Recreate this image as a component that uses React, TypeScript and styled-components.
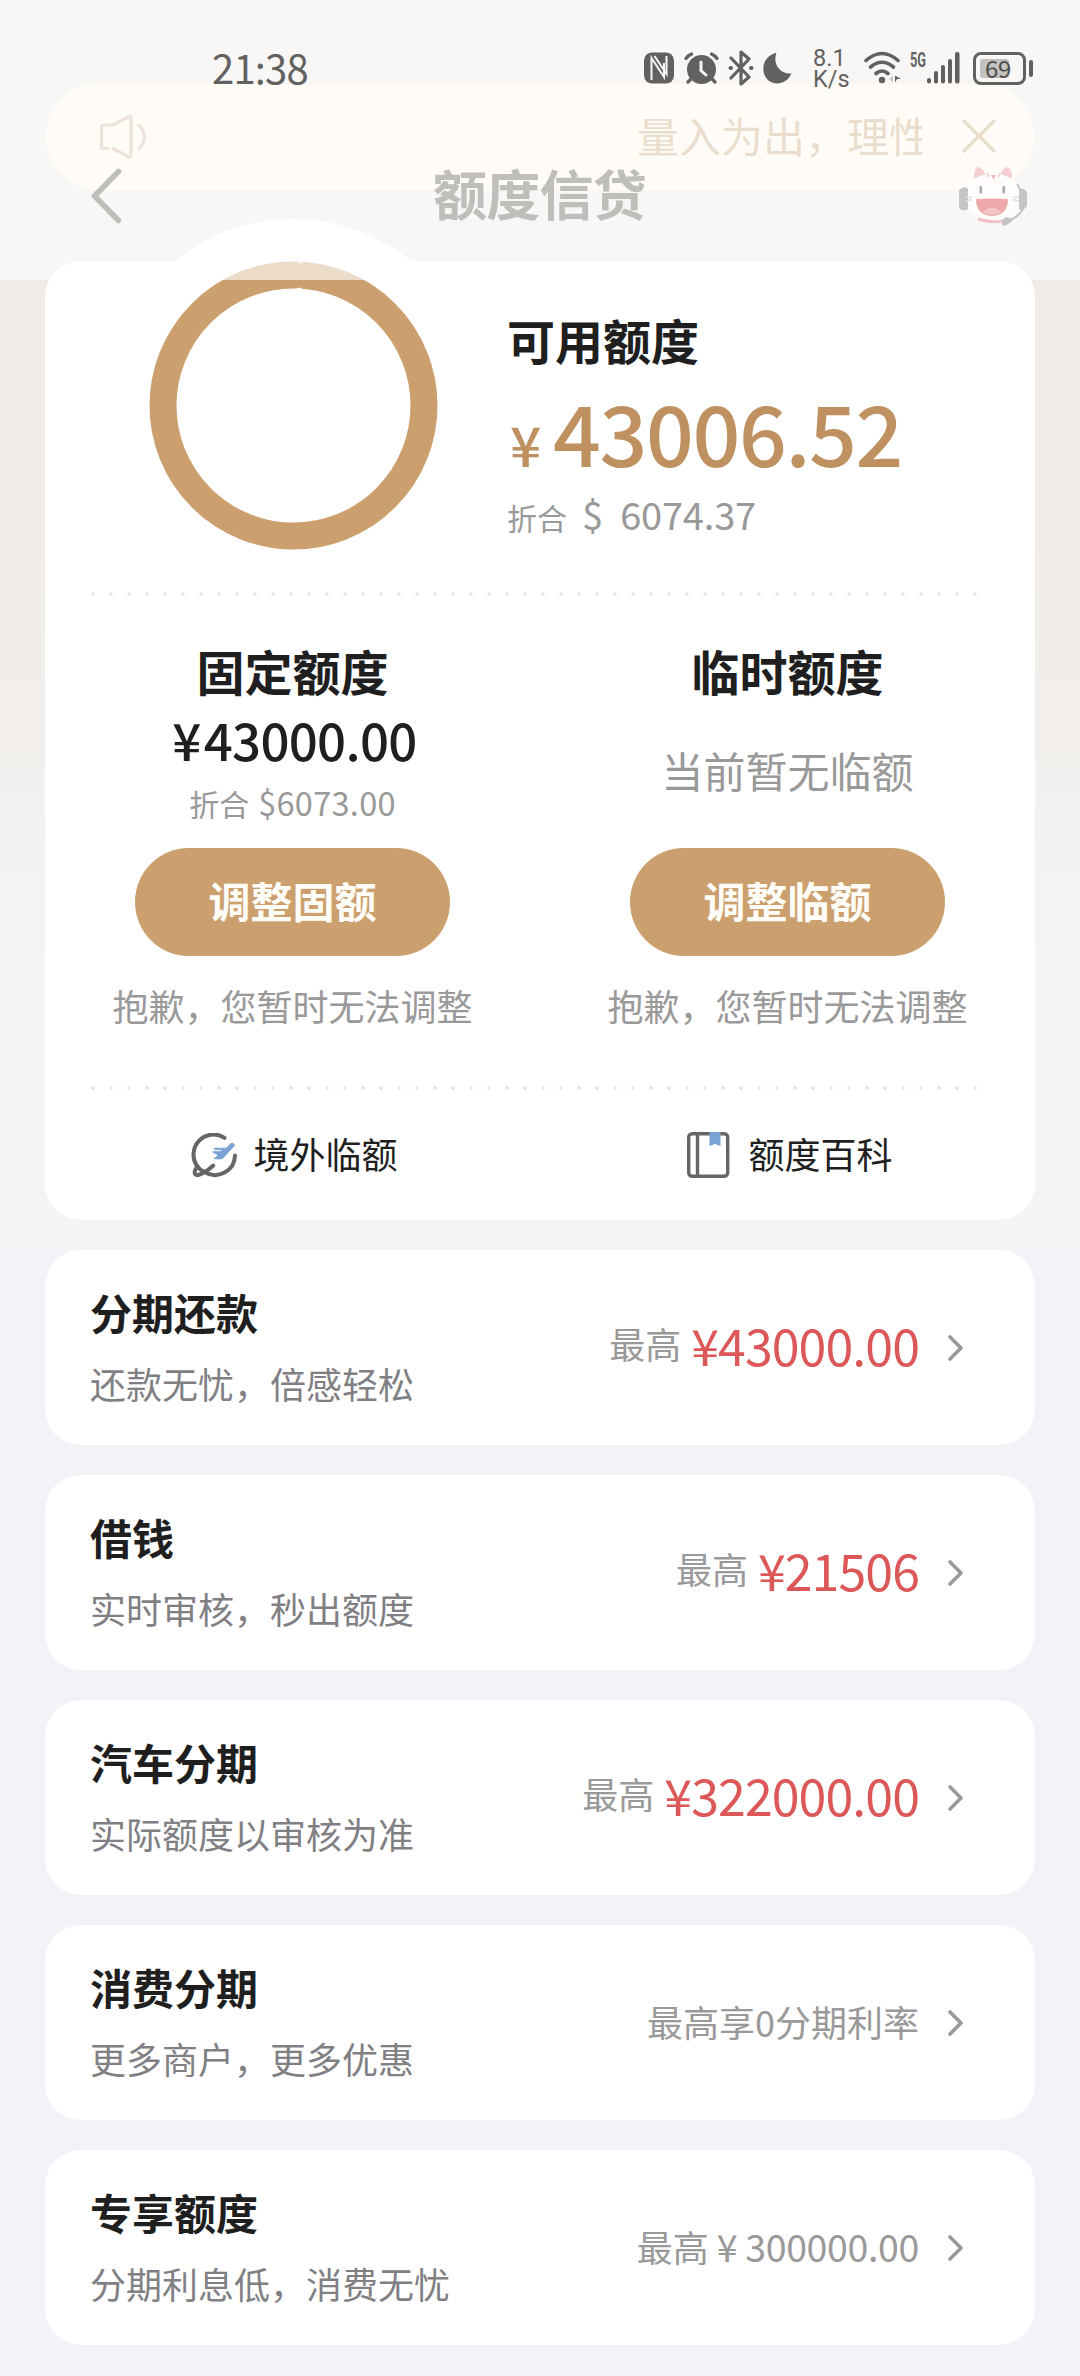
import React from "react";
import styled, { createGlobalStyle } from "styled-components";

const FONT = `"Noto Sans CJK SC", "Noto Sans", sans-serif`;

const GlobalStyle = createGlobalStyle`
  * { box-sizing: border-box; }
  body { margin: 0; background: #f2f3f8; font-family: ${FONT}; }
`;

const Page = styled.div`
  position: relative;
  width: 1080px;
  height: 2376px;
  overflow: hidden;
  padding: 84px 45px 0;
  background: linear-gradient(180deg, #f0ebe6 0, #f0ebe6 540px, #f4f4f4 960px, #f4f4f4 1244px, #f2f3f8 1256px);
`;

/* Translucent header laid over the scrolled content */
const Header = styled.header`
  position: absolute;
  inset: 0 0 auto 0;
  z-index: 2;
  height: 280px;
  background: rgba(255, 255, 255, 0.62);
`;

const StatusBar = styled.div`
  height: 94px;
  padding: 44px 47px 0 212px;
  display: flex;
  justify-content: space-between;
  align-items: flex-start;
  color: #62615f;
`;

const Clock = styled.div`
  font-size: 40px;
  line-height: 46px;
  letter-spacing: -0.8px;
`;

const StatusIcons = styled.div`
  display: flex;
  align-items: flex-start;
  height: 48px;
`;

const StatusGlyph = styled.svg<{ $gap?: number }>`
  display: block;
  flex: none;
  margin-left: ${(p) => p.$gap ?? 0}px;
`;

const NetSpeed = styled.div`
  width: 36px;
  margin: 4px 0 0 20px;
  font-family: Roboto, sans-serif;
  font-size: 23.5px;
  line-height: 21px;
  white-space: nowrap;
`;

const NetType = styled.div`
  width: 16px;
  margin: 7px 0 0 9px;
  font-family: Roboto, sans-serif;
  font-weight: 700;
  font-size: 20px;
  line-height: 18px;
  transform: scaleX(0.64);
  transform-origin: 0 0;
`;

const Battery = styled.div`
  display: flex;
  align-items: center;
  margin: 8px 0 0 13px;
`;

const BatteryShell = styled.div`
  width: 53px;
  height: 33px;
  padding: 4px;
  border: 3px solid #62615f;
  border-radius: 8px;
`;

const BatteryLevel = styled.div`
  width: 29px;
  height: 19px;
  border-radius: 3px;
  background: #c3c2c0;
  font-size: 24px;
  line-height: 17px;
  padding-left: 5px;
  letter-spacing: -0.4px;
  color: #4e4d4b;
`;

const BatteryTip = styled.div`
  width: 4px;
  height: 17px;
  margin-left: 3px;
  border-radius: 2px;
  background: #62615f;
`;

const TitleBar = styled.div`
  height: 186px;
  padding: 72px 52px 0 88px;
  display: grid;
  grid-template-columns: 72px 1fr 72px;
  align-items: start;
`;

const Title = styled.h1`
  margin: -1px 0 0 -37px;
  text-align: center;
  font-size: 54px;
  font-weight: 700;
  line-height: 56px;
  letter-spacing: -0.8px;
  color: #bfbebb;
`;

const BackIcon = styled.svg`
  display: block;
`;

const Mascot = styled.svg`
  display: block;
  margin: -3px 0 0 1px;
`;

const Notice = styled.div`
  height: 106px;
  margin: 0 1px 71px;
  padding: 0 38px 0 52px;
  border-radius: 53px;
  background: #fff8e9;
  display: flex;
  align-items: center;
`;

const NoticeText = styled.div`
  width: 285px;
  margin: -4px 40px 0 auto;
  overflow: hidden;
  white-space: nowrap;
  font-size: 42px;
  line-height: 60px;
  color: #caa67f;
`;

const Card = styled.section`
  position: relative;
  border-radius: 36px;
  background: #fff;
`;

const QuotaCard = styled(Card)`
  height: 959px;
`;

/* White halo that rises out of the top edge of the card */
const Halo = styled.div`
  position: absolute;
  left: 62px;
  top: -42px;
  width: 372px;
  height: 372px;
  border-radius: 50%;
  background: #fff;
`;

const Summary = styled.div`
  position: relative;
  height: 331px;
  display: flex;
`;

const Ring = styled.svg`
  flex: none;
  margin-left: 104px;
`;

const SummaryText = styled.div`
  margin-left: 68px;
  padding-top: 50px;
`;

const Heading = styled.h2`
  margin: 0;
  font-size: 48px;
  font-weight: 700;
  line-height: 56px;
  color: #1f1f1f;
`;

const Total = styled.div`
  height: 100px;
  margin: 14px 0 0 -1px;
  display: flex;
  align-items: baseline;
  font-weight: 500;
  font-size: 84px;
  line-height: 100px;
  letter-spacing: -1.4px;
  color: #bf9160;
`;

const TotalSign = styled.span`
  font-size: 55px;
  width: 47px;
  padding-left: 4px;
`;

const Converted = styled.div`
  display: flex;
  align-items: baseline;
  margin-top: 8px;
  font-size: 30px;
  line-height: 50px;
  color: #999;
`;

const Dollar = styled.span`
  margin-left: 15px;
  font-size: 38px;
  letter-spacing: -0.2px;
  word-spacing: 9px;
`;

const Dots = styled.div`
  width: 888px;
  height: 4px;
  margin: 0 0 0 45px;
  background: radial-gradient(circle at 3px 2px, #e8e8e8 1.5px, transparent 2.1px) 0 0 / 18px 4px repeat-x;
`;

const Columns = styled.div`
  display: grid;
  grid-template-columns: 1fr 1fr;
`;

const Column = styled.div`
  height: 490px;
  padding-top: 46px;
  display: flex;
  flex-direction: column;
  align-items: center;
`;

const ColumnBody = styled.div`
  height: 150px;
  display: flex;
  flex-direction: column;
  align-items: center;
`;

const Amount = styled.div`
  margin: 10px 0 0 4px;
  display: flex;
  gap: 3px;
  font-size: 51px;
  font-weight: 500;
  line-height: 62px;
  letter-spacing: -0.7px;
  color: #1f1f1f;
`;

const Small = styled.div`
  margin-top: 10px;
  font-size: 30px;
  line-height: 44px;
  color: #999;
`;

const SmallAmount = styled.span`
  margin-left: 9px;
  font-size: 32.5px;
  letter-spacing: 0.3px;
`;

const Empty = styled.div`
  margin-top: 42px;
  font-size: 42px;
  line-height: 60px;
  color: #999;
`;

const Pill = styled.button`
  width: 315px;
  height: 108px;
  padding: 0 0 5px;
  border: 0;
  border-radius: 54px;
  background: #cca06e;
  color: #fffdf8;
  font-family: ${FONT};
  font-size: 42px;
  font-weight: 700;
`;

const Hint = styled.div`
  margin-top: 23px;
  font-size: 36px;
  line-height: 52px;
  color: #999;
`;

const Links = styled(Columns)`
  height: 131px;
`;

const LinkItem = styled.div`
  display: flex;
  align-items: center;
  justify-content: center;
  gap: 16px;
  padding-left: 4px;
  font-size: 36px;
  line-height: 50px;
  color: #1f1f1f;
`;

const LinkLabel = styled.span`
  padding-bottom: 5px;
`;

const Products = styled.div`
  display: flex;
  flex-direction: column;
  gap: 30px;
  margin-top: 30px;
`;

const Product = styled(Card)`
  height: 195px;
  padding: 0 71px 0 45px;
  display: flex;
  align-items: center;
  justify-content: space-between;
`;

const ProductText = styled.div`
  padding-bottom: 4px;
`;

const ProductName = styled.h3`
  margin: 0;
  font-size: 42px;
  font-weight: 700;
  line-height: 60px;
  color: #1f1f1f;
`;

const ProductNote = styled.p`
  margin: 15px 0 0;
  font-size: 36px;
  line-height: 52px;
  color: #7f7f84;
`;

const ProductValue = styled.div`
  display: flex;
  align-items: center;
  font-size: 36px;
  line-height: 60px;
  color: #999;
`;

const ValueText = styled.span<{ $priced?: boolean }>`
  display: flex;
  align-items: ${(p) => (p.$priced ? "center" : "baseline")};
  margin-right: 28px;
  padding-bottom: ${(p) => (p.$priced ? 9 : 4)}px;
`;

const Price = styled.span`
  margin: 2px 0 0 10px;
  font-size: 50px;
  letter-spacing: -0.9px;
  color: #dc5757;
`;

const PlainPrice = styled.span`
  font-size: 37.5px;
  margin-left: 8px;
  display: flex;
  gap: 8px;
  letter-spacing: -0.35px;
`;

const ChevronRight = () => (
  <svg width="17" height="28" viewBox="0 0 17 28" fill="none" stroke="#999" strokeWidth="3.6" strokeLinecap="round" strokeLinejoin="round">
    <path d="M3 3 L14 14 L3 25" />
  </svg>
);

const CloseIcon = () => (
  <svg width="34" height="34" viewBox="0 0 34 34" fill="none" stroke="#caa67f" strokeWidth="3.4" strokeLinecap="round">
    <path d="M2 1 L32 31 M32 1 L2 31" />
  </svg>
);

const SpeakerIcon = () => (
  <svg width="50" height="48" viewBox="0 0 50 48" fill="none" stroke="#d4b398" strokeWidth="3.2" strokeLinecap="round" strokeLinejoin="round">
    <path d="M10 35.500 H4.500 Q3.500 35.500 3.500 34.500 V14 Q3.500 12 5.500 12 H13 Q15 12 17 11 L31 3.500 Q33 2.500 33 5 V41 Q33 45 30 43.500 L15 35.500" />
    <path d="M41 12.500 Q52 24 41 35.500" />
  </svg>
);

const PlaneGlobeIcon = () => (
  <svg width="46" height="46" viewBox="190 1132 46 46" fill="none" stroke="#666" strokeWidth="4" strokeLinecap="round" strokeLinejoin="round">
    <path d="M223.500 1136.800 A20 20 0 0 0 196.500 1165.500" />
    <path d="M234 1154.500 A20 20 0 0 1 203.500 1171" />
    <path d="M196.500 1165.500 C192 1171 193 1175.500 198.500 1173.500 C203 1172 208 1168.500 212.200 1164.500" />
    <path d="M196.500 1165.500 Q198.500 1168.500 203.500 1171" />
    <path
      fill="#79a3d2"
      stroke="#79a3d2"
      strokeWidth="0.8"
      d="M230 1142.500 Q233 1141.500 233.500 1144.500 L222.500 1156.500 Q221 1158 218.500 1158 L213 1157.500 L217 1154.500 L215.500 1153 L212 1151.500 L212.500 1150.500 L219 1150.800 L221.500 1149 L213 1148.300 L214 1147 L225 1147.200 Z"
    />
  </svg>
);

const BookIcon = () => (
  <svg width="46" height="48" viewBox="0 1 46 48" fill="none" stroke="#666" strokeWidth="3.4">
    <rect x="2.700" y="2.700" width="39" height="42.600" rx="3.500" />
    <path d="M11.500 3 V45" />
    <path d="M23.500 1 H34.500 V15 L29 13 L23.500 15 Z" fill="#79a3d2" stroke="none" />
  </svg>
);

const NfcIcon = () => (
  <StatusGlyph width="30" height="32" viewBox="0 0 30 32">
    <rect x="0" y="0.500" width="30" height="31" rx="8" fill="currentColor" />
    <path d="M7.500 28 V6 L20 25 V11 M10.500 4 L22.500 22 V4" fill="none" stroke="#f8f7f5" strokeWidth="2" />
  </StatusGlyph>
);

const AlarmIcon = () => (
  <StatusGlyph $gap={10} width="35" height="32" viewBox="0 0 35 32">
    <g fill="none" stroke="currentColor" strokeWidth="3.200" strokeLinecap="round">
      <path d="M2 6.500 Q4 3.500 7.500 2 M33 6.500 Q31 3.500 27.500 2 M8 26 L4 30 M27 26 L31 30" />
    </g>
    <circle cx="17.500" cy="17.500" r="14.500" fill="currentColor" />
    <path d="M17 10 V18.500 L22 23" fill="none" stroke="#f8f7f5" strokeWidth="3" strokeLinecap="round" />
  </StatusGlyph>
);

const BluetoothIcon = () => (
  <StatusGlyph $gap={9} width="26" height="36" viewBox="0 0 26 36" fill="none" stroke="currentColor" strokeWidth="3.2" strokeLinejoin="round" strokeLinecap="round">
    <path d="M3 8 L21 27 L13 34 V2 L21 9 L3 28" />
    <path d="M2.500 18 H3 M23 18 H23.500" strokeWidth="4" />
  </StatusGlyph>
);

const MoonIcon = () => (
  <StatusGlyph $gap={9} width="30" height="32" viewBox="0 0 30 32" fill="currentColor">
    <path d="M13.500 0.500 C9.500 11 16 22.500 28.500 21.500 C24 31.500 14 33.500 7 29.500 C-3 23 -2.500 5 13.500 0.500 Z" />
  </StatusGlyph>
);

const WifiIcon = () => (
  <StatusGlyph $gap={15} width="37" height="34" viewBox="0 0 37 34" fill="none" stroke="currentColor" strokeWidth="3.600" strokeLinecap="round">
    <path d="M2 9.500 Q18 -4.500 34 9.500" />
    <path d="M6.500 16 Q18 6.500 29.500 16" />
    <path d="M12 22.500 Q18 17.500 24 22.500" />
    <circle cx="18" cy="29" r="3.200" fill="currentColor" stroke="none" />
    <path d="M31 24.500 V31.500 L33 28 H37 Z" fill="currentColor" stroke="none" />
    <path d="M29 24.500 V31.500 L25 28 Z" fill="#c9c8c6" stroke="none" />
  </StatusGlyph>
);

const SignalIcon = () => (
  <StatusGlyph $gap={1} width="33" height="32" viewBox="0 0 33 32" fill="currentColor">
    <rect x="0" y="26" width="4" height="5.500" rx="2" />
    <rect x="7" y="19" width="4" height="12.500" rx="2" />
    <rect x="14" y="13" width="4" height="18.500" rx="2" />
    <rect x="21" y="7" width="4" height="24.500" rx="2" />
    <rect x="28" y="0" width="4.500" height="31.500" rx="2" />
  </StatusGlyph>
);

const GlyphRow = styled.div`
  display: flex;
  align-items: center;
  height: 36px;
  margin-top: 6px;
`;

const products: { name: string; note: string; label: string; price?: string; plain?: string }[] = [
  { name: "分期还款", note: "还款无忧，倍感轻松", label: "最高", price: "¥43000.00" },
  { name: "借钱", note: "实时审核，秒出额度", label: "最高", price: "¥21506" },
  { name: "汽车分期", note: "实际额度以审核为准", label: "最高", price: "¥322000.00" },
  { name: "消费分期", note: "更多商户，更多优惠", label: "最高享0分期利率" },
  { name: "专享额度", note: "分期利息低，消费无忧", label: "最高", plain: "300000.00" },
];

export default function App() {
  return (
    <Page>
      <GlobalStyle />
      <Header>
        <StatusBar>
          <Clock>21:38</Clock>
          <StatusIcons>
            <GlyphRow>
              <NfcIcon />
              <AlarmIcon />
              <BluetoothIcon />
              <MoonIcon />
            </GlyphRow>
            <NetSpeed>
              8.1
              <br />
              K/s
            </NetSpeed>
            <GlyphRow>
              <WifiIcon />
            </GlyphRow>
            <NetType>5G</NetType>
            <GlyphRow>
              <SignalIcon />
            </GlyphRow>
            <Battery>
              <BatteryShell>
                <BatteryLevel>69</BatteryLevel>
              </BatteryShell>
              <BatteryTip />
            </Battery>
          </StatusIcons>
        </StatusBar>
        <TitleBar>
          <BackIcon width="36" height="60" viewBox="88 166 36 60" fill="none" stroke="#bfbebb" strokeWidth="5.500" strokeLinecap="round" strokeLinejoin="round">
            <path d="M118.500 171.500 L94.500 196 L118.500 220.500" />
          </BackIcon>
          <Title>额度信贷</Title>
          <Mascot width="72" height="66" viewBox="957 163 72 66">
            <path d="M974 178 Q974 168 978 167 Q983 168 986 176 Z" fill="#f6cdd1" />
            <path d="M1012 178 Q1012 168 1007 167 Q1003 168 1000 176 Z" fill="#f6cdd1" />
            <ellipse cx="993" cy="198" rx="29" ry="24.500" fill="#fffcfc" />
            <path d="M959 190 Q965 185 968 189 V209 Q963 212 959 208 Z" fill="#c6c5c5" />
            <path d="M1027 192 Q1023 186 1019 190 V209 Q1023 212 1027 206 Z" fill="#c6c5c5" />
            <path d="M1017 184 Q1021 190 1022 198 M1023 209 Q1017 219 1005 222" fill="none" stroke="#c4c3c3" strokeWidth="2" />
            <path d="M1001 221 L1006 217 L1013 219 Q1011 224 1003 226 Z" fill="#c4c3c3" />
            <path d="M987 173 L988.500 177 M1000 173 L998.500 177" stroke="#f7d3d7" strokeWidth="2" />
            <path d="M991 175 L993.500 180 L996 175 Z" fill="#f1b9c0" />
            <rect x="979.500" y="186" width="2.500" height="7.500" rx="1.200" fill="#aaa9a9" />
            <rect x="1002.500" y="186" width="2.500" height="7.500" rx="1.200" fill="#aaa9a9" />
            <path d="M976 199 Q992 198 1008 199 Q1008 215 992 216 Q976 215 976 199 Z" fill="#eda9a9" />
            <path d="M983 212 Q992 203 1001 212 Q992 217 983 212 Z" fill="#f6c6c6" />
            <path d="M978 219 Q990 223 1003 221" fill="none" stroke="#efc3c8" strokeWidth="3" />
            <path d="M966 197 H972 M966 201 L972 199.500 M1013 197 H1019 M1013 199.500 L1019 201" stroke="#dfdddd" strokeWidth="1.300" />
          </Mascot>
        </TitleBar>
      </Header>

      <Notice>
        <SpeakerIcon />
        <NoticeText>量入为出，理性消费</NoticeText>
        <CloseIcon />
      </Notice>

      <QuotaCard>
        <Halo />
        <Summary>
          <Ring width="290" height="290" viewBox="0 0 290 290">
            <circle cx="144.500" cy="144.500" r="130.500" fill="none" stroke="#cca06e" strokeWidth="27" />
            <path d="M148 0.500 L155 0.500 L151.500 2.500 Z M145 28.500 L150 26.500 L155 28.500 Z" fill="#fff" />
          </Ring>
          <SummaryText>
            <Heading>可用额度</Heading>
            <Total>
              <TotalSign>¥</TotalSign>43006.52
            </Total>
            <Converted>
              折合<Dollar>$ 6074.37</Dollar>
            </Converted>
          </SummaryText>
        </Summary>
        <Dots />
        <Columns>
          <Column>
            <Heading>固定额度</Heading>
            <ColumnBody>
              <Amount>
                <span>¥</span>
                <span>43000.00</span>
              </Amount>
              <Small>
                折合<SmallAmount>$6073.00</SmallAmount>
              </Small>
            </ColumnBody>
            <Pill>调整固额</Pill>
            <Hint>抱歉，您暂时无法调整</Hint>
          </Column>
          <Column>
            <Heading>临时额度</Heading>
            <ColumnBody>
              <Empty>当前暂无临额</Empty>
            </ColumnBody>
            <Pill>调整临额</Pill>
            <Hint>抱歉，您暂时无法调整</Hint>
          </Column>
        </Columns>
        <Dots />
        <Links>
          <LinkItem>
            <PlaneGlobeIcon />
            <LinkLabel>境外临额</LinkLabel>
          </LinkItem>
          <LinkItem>
            <BookIcon />
            <LinkLabel>额度百科</LinkLabel>
          </LinkItem>
        </Links>
      </QuotaCard>

      <Products>
        {products.map((p) => (
          <Product key={p.name}>
            <ProductText>
              <ProductName>{p.name}</ProductName>
              <ProductNote>{p.note}</ProductNote>
            </ProductText>
            <ProductValue>
              <ValueText $priced={!!p.price}>
                <span>{p.label}</span>
                {p.price && <Price>{p.price}</Price>}
                {p.plain && (
                  <PlainPrice>
                    <span>¥</span>
                    <span>{p.plain}</span>
                  </PlainPrice>
                )}
              </ValueText>
              <ChevronRight />
            </ProductValue>
          </Product>
        ))}
      </Products>
    </Page>
  );
}
